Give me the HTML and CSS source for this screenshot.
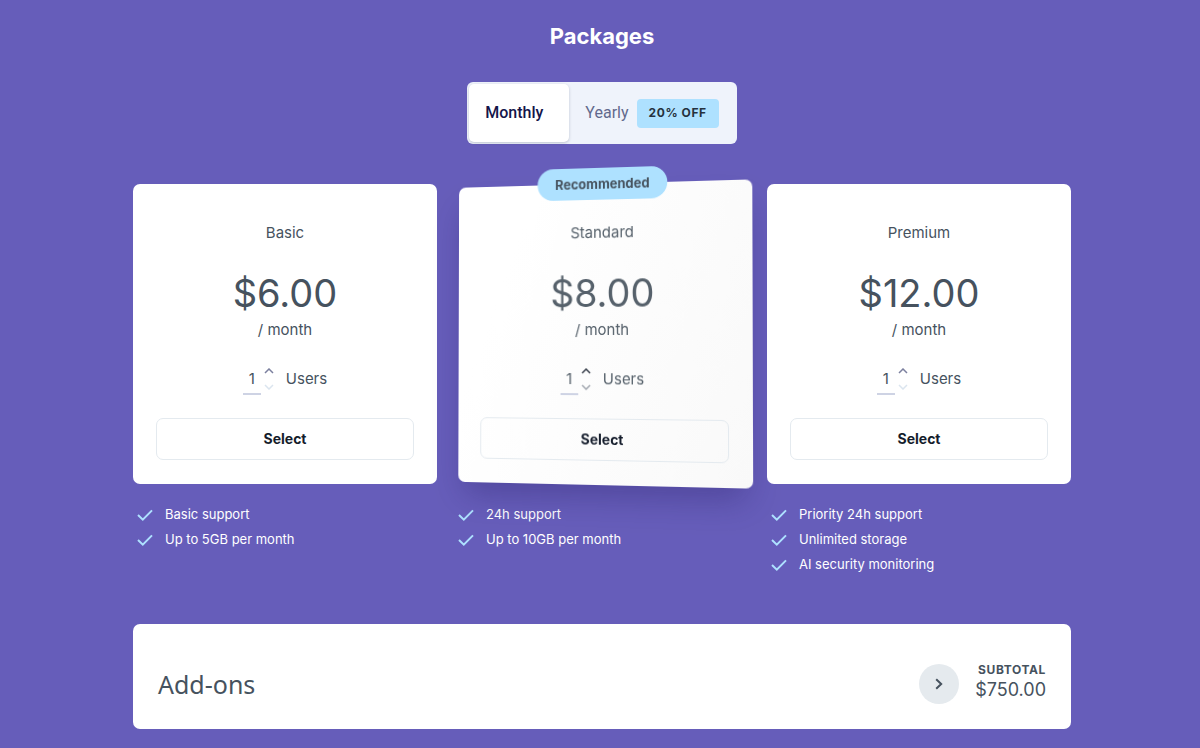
FILE: index.html
```html
<!DOCTYPE html>
<html lang="en">
<head>
    <meta charset="UTF-8">
    <meta name="viewport" content="width=device-width, initial-scale=1.0">
    <title>Packages</title>
    <link rel="stylesheet" href="styles.css">
</head>
<body>

    <!-- Shared icons -->
    <svg class="sprite" aria-hidden="true">
        <symbol id="check" viewBox="0 0 16 12"><path d="M1 6l4.8 4.6L15 1.4" /></symbol>
        <symbol id="up" viewBox="0 0 10 6"><path d="M1 5l4-4 4 4" /></symbol>
        <symbol id="down" viewBox="0 0 10 6"><path d="M1 1l4 4 4-4" /></symbol>
        <symbol id="right" viewBox="0 0 8 12"><path d="M1.2 1.2L6.2 6l-5 4.8" /></symbol>
    </svg>

    <main class="packages">
        <h1>Packages</h1>

        <!-- Billing period -->
        <div class="toggle">
            <button type="button" class="tab active" aria-pressed="true">Monthly</button>
            <button type="button" class="tab" aria-pressed="false">Yearly <span class="discount">20% OFF</span></button>
        </div>

        <!-- Plans -->
        <div class="plans">
            <section class="plan">
                <div class="card">
                    <h2>Basic</h2>
                    <p class="price">$6.00</p>
                    <p class="period">/ month</p>
                    <div class="users">
                        <input type="text" inputmode="numeric" id="basicUsers" value="1">
                        <div class="stepper">
                            <button type="button" class="more" aria-label="Add user"><svg><use href="#up" /></svg></button>
                            <button type="button" class="less" aria-label="Remove user"><svg><use href="#down" /></svg></button>
                        </div>
                        <label for="basicUsers">Users</label>
                    </div>
                    <button type="button" class="select">Select</button>
                </div>
                <ul class="features">
                    <li><svg><use href="#check" /></svg>Basic support</li>
                    <li><svg><use href="#check" /></svg>Up to 5GB per month</li>
                </ul>
            </section>

            <section class="plan">
                <div class="card recommended">
                    <span class="ribbon">Recommended</span>
                    <h2>Standard</h2>
                    <p class="price">$8.00</p>
                    <p class="period">/ month</p>
                    <div class="users">
                        <input type="text" inputmode="numeric" id="standardUsers" value="1">
                        <div class="stepper">
                            <button type="button" class="more" aria-label="Add user"><svg><use href="#up" /></svg></button>
                            <button type="button" class="less" aria-label="Remove user"><svg><use href="#down" /></svg></button>
                        </div>
                        <label for="standardUsers">Users</label>
                    </div>
                    <button type="button" class="select">Select</button>
                </div>
                <ul class="features">
                    <li><svg><use href="#check" /></svg>24h support</li>
                    <li><svg><use href="#check" /></svg>Up to 10GB per month</li>
                </ul>
            </section>

            <section class="plan">
                <div class="card">
                    <h2>Premium</h2>
                    <p class="price">$12.00</p>
                    <p class="period">/ month</p>
                    <div class="users">
                        <input type="text" inputmode="numeric" id="premiumUsers" value="1">
                        <div class="stepper">
                            <button type="button" class="more" aria-label="Add user"><svg><use href="#up" /></svg></button>
                            <button type="button" class="less" aria-label="Remove user"><svg><use href="#down" /></svg></button>
                        </div>
                        <label for="premiumUsers">Users</label>
                    </div>
                    <button type="button" class="select">Select</button>
                </div>
                <ul class="features">
                    <li><svg><use href="#check" /></svg>Priority 24h support</li>
                    <li><svg><use href="#check" /></svg>Unlimited storage</li>
                    <li><svg><use href="#check" /></svg>AI security monitoring</li>
                </ul>
            </section>
        </div>

        <!-- Add-ons -->
        <section class="addons">
            <h2>Add-ons</h2>
            <button type="button" class="open" aria-label="Show add-ons"><svg><use href="#right" /></svg></button>
            <div class="subtotal">
                <span class="caption">SUBTOTAL</span>
                <span class="amount">$750.00</span>
            </div>
        </section>
    </main>

</body>
</html>
```
FILE: styles.css
```css
* {
    margin: 0;
    padding: 0;
    box-sizing: border-box;
}

body {
    font-family: Inter, "Liberation Sans", sans-serif;
    font-size: 15px;
    line-height: 24px;
    color: #46525e;
    background-color: #665dba;
    min-height: 100vh;
    padding: 20px 16px 19px 20px;
}

button,
input {
    font: inherit;
    color: inherit;
    border: none;
    background: none;
}

button {
    cursor: pointer;
}

svg {
    display: block;
    fill: none;
    stroke: currentColor;
}

.sprite {
    position: absolute;
    width: 0;
    height: 0;
}

.packages {
    max-width: 938px;
    margin: 0 auto;
}

h1 {
    font-size: 22px;
    line-height: 32px;
    font-weight: 700;
    color: #fff;
    text-align: center;
}

/* Billing period */
.toggle {
    display: flex;
    width: fit-content;
    margin: 30px auto 40px;
    padding: 2px;
    height: 62px;
    background-color: #eff3fb;
    border-radius: 6px;
}

.tab {
    display: flex;
    align-items: center;
    gap: 8px;
    padding: 0 16px;
    font-family: Roboto, sans-serif;
    font-size: 16px;
    color: #62698d;
    border-radius: 5px;
}

.tab.active {
    padding-right: 26px;
    font-weight: 500;
    color: #14154a;
    background-color: #fff;
    box-shadow: 0 1px 3px rgba(40, 50, 80, 0.25);
}

.discount {
    padding: 2px 12px 3px;
    font-family: Inter, sans-serif;
    font-size: 12px;
    font-weight: 700;
    letter-spacing: 0.05em;
    color: #25313d;
    background-color: #aee1ff;
    border-radius: 4px;
}

/* Plans */
.plans {
    display: grid;
    grid-template-columns: 304fr 296fr 304fr;
    gap: 17px;
}

.card {
    position: relative;
    padding: 37px 23px 24px;
    text-align: center;
    background-color: #fff;
    border-radius: 7px;
}

.card h2 {
    font-size: 15px;
    font-weight: 400;
}

.recommended {
    color: #56616b;
    background: linear-gradient(110deg, #fff 20%, #f9f9f9);
    box-shadow: 0 18px 32px -6px rgba(30, 20, 90, 0.3);
    transform: perspective(920px) rotateX(1deg) rotateY(-9deg) scale(1.005);
}

.ribbon {
    position: absolute;
    top: -16px;
    left: 50%;
    padding: 4px 18px;
    font-size: 13px;
    font-weight: 700;
    color: #46525e;
    background-color: #aee1ff;
    border-radius: 16px;
    transform: translateX(-50%);
}

.price {
    margin-top: 24px;
    font-size: 38px;
    line-height: 49px;
}

.users {
    display: flex;
    justify-content: center;
    align-items: center;
    margin: 21px 0 23px;
}

.users input {
    width: 18px;
    height: 32px;
    text-align: center;
    border-bottom: 2px solid #ced3e4;
}

.stepper {
    display: grid;
    gap: 10px;
    margin: 0 12px 0 3px;
}

.stepper svg {
    width: 10px;
    height: 6px;
    stroke-width: 1.5;
}

.more {
    color: #7c809f;
}

.less {
    color: #dbe5ef;
}

.recommended .more {
    color: #39404c;
}

.recommended .less {
    color: #a3a8b0;
}

.select {
    width: 100%;
    height: 42px;
    font-size: 14px;
    font-weight: 700;
    color: #141c2b;
    border: 1px solid #e4eaef;
    border-radius: 7px;
}

.features {
    list-style: none;
    margin-top: 18px;
    padding-left: 4px;
}

.features li {
    display: flex;
    align-items: center;
    gap: 12px;
    font-size: 13px;
    line-height: 25px;
    color: #fff;
}

.features svg {
    width: 16px;
    height: 12px;
    color: #aee1ff;
    stroke-width: 2;
}

/* Add-ons */
.addons {
    display: flex;
    align-items: center;
    margin-top: 47px;
    padding: 38px 25px 23px;
    background-color: #fff;
    border-radius: 7px;
}

.addons h2 {
    flex: 1;
    font-family: "Noto Sans", sans-serif;
    font-size: 25px;
    font-weight: 400;
}

.open {
    display: grid;
    place-items: center;
    width: 40px;
    height: 40px;
    margin-right: 16px;
    background-color: #e5eaee;
    border-radius: 50%;
}

.open svg {
    width: 8px;
    height: 12px;
    stroke-width: 2;
}

.subtotal {
    display: grid;
    padding-bottom: 4px;
    text-align: right;
}

.caption {
    font-size: 12px;
    line-height: 16px;
    font-weight: 700;
    letter-spacing: 0.05em;
}

.amount {
    font-size: 18px;
}
```
